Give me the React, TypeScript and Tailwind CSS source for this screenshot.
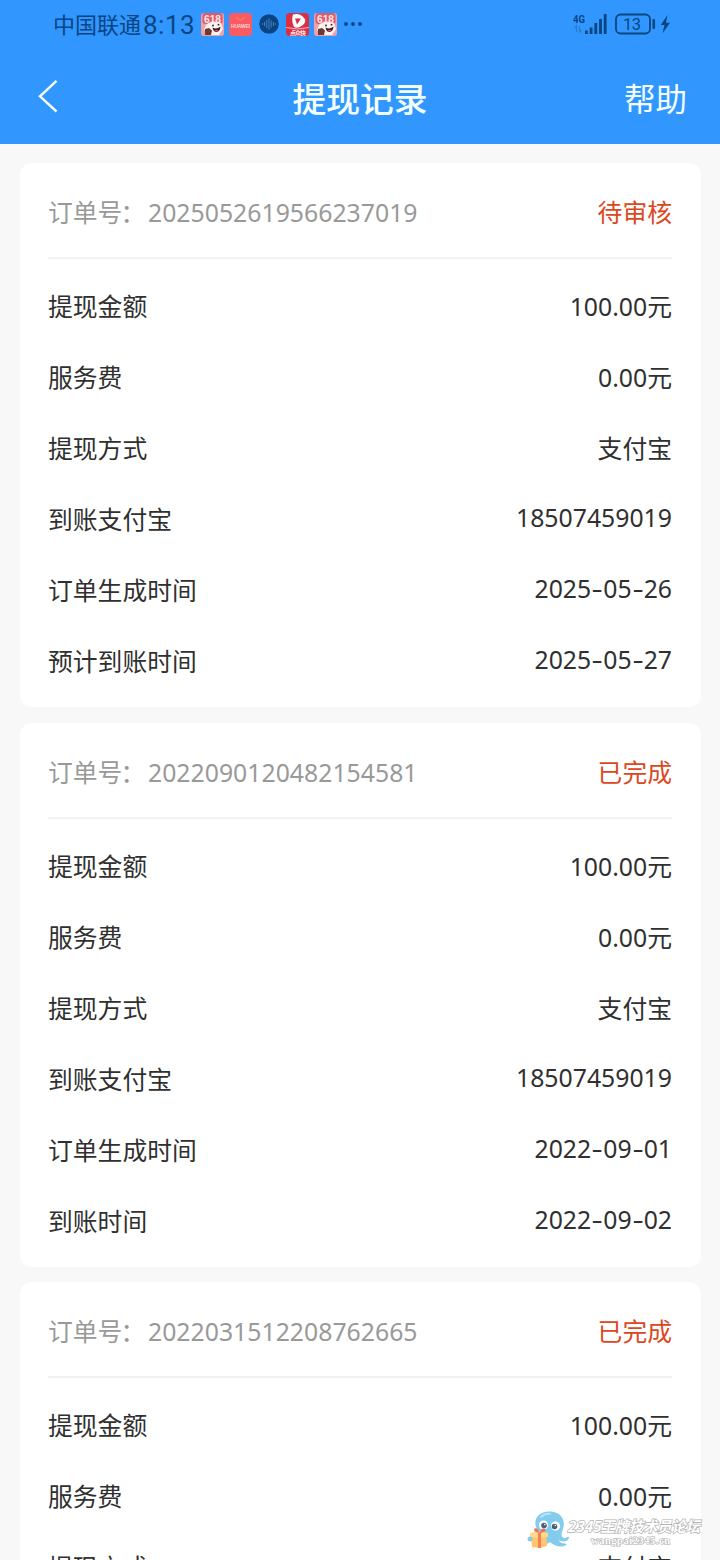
import React from 'react';

interface OrderRow {
  label: string;
  value: string;
  latin?: boolean;
}

interface Order {
  id: string;
  status: string;
  rows: OrderRow[];
}

const orders: Order[] = [
  {
    id: '2025052619566237019',
    status: '待审核',
    rows: [
      { label: '提现金额', value: '100.00元' },
      { label: '服务费', value: '0.00元' },
      { label: '提现方式', value: '支付宝' },
      { label: '到账支付宝', value: '18507459019', latin: true },
      { label: '订单生成时间', value: '2025-05-26', latin: true },
      { label: '预计到账时间', value: '2025-05-27', latin: true },
    ],
  },
  {
    id: '2022090120482154581',
    status: '已完成',
    rows: [
      { label: '提现金额', value: '100.00元' },
      { label: '服务费', value: '0.00元' },
      { label: '提现方式', value: '支付宝' },
      { label: '到账支付宝', value: '18507459019', latin: true },
      { label: '订单生成时间', value: '2022-09-01', latin: true },
      { label: '到账时间', value: '2022-09-02', latin: true },
    ],
  },
  {
    id: '2022031512208762665',
    status: '已完成',
    rows: [
      { label: '提现金额', value: '100.00元' },
      { label: '服务费', value: '0.00元' },
      { label: '提现方式', value: '支付宝' },
    ],
  },
];

const SaleIcon: React.FC = () => (
  <svg className="h-[23px] w-[23px]" viewBox="0 0 23 23">
    <rect width="23" height="23" rx="3" fill="#f0a0a8" />
    <rect x="1.500" width="20" height="11" rx="3" fill="#df5a6c" />
    <path d="M5 12C8 8 16 8 20 10l2 6-4 6H9L3 17z" fill="#fff3f1" />
    <text x="3" y="9.500" fontSize="11" fontWeight="700" fill="#ffe9e6" fontFamily="Liberation Sans, sans-serif" textLength="17" lengthAdjust="spacingAndGlyphs">618</text>
    <path d="M4 16l4-1 3 2.500-1 4.500H4z" fill="#6b3b2e" />
    <path d="M11.500 14.500q4 2.500 8-1-.5 5-4 5.500-3 0-4-4.500z" fill="#35191e" />
    <path d="M13.500 17.500q2-1 4-.5-2 2.500-4 .5z" fill="#e95566" />
    <circle cx="12" cy="12.500" r=".9" fill="#35191e" />
    <circle cx="17.500" cy="11.700" r=".9" fill="#35191e" />
  </svg>
);

const HuaweiIcon: React.FC = () => (
  <svg className="h-[23px] w-[23px]" viewBox="0 0 23 23">
    <rect width="23" height="23" rx="4" fill="#fa5a62" />
    <path d="M7.500 4q4 6 8 0" fill="none" stroke="#ff7e68" strokeWidth="1.300" />
    <text x="2" y="14.500" fontSize="5" fontWeight="700" fill="#ffd3d1" fontFamily="Liberation Sans, sans-serif" textLength="19">HUAWEI</text>
  </svg>
);

const VoiceIcon: React.FC = () => (
  <svg className="h-5 w-5" viewBox="0 0 20 20">
    <circle cx="10" cy="10" r="9.800" fill="#0b4380" />
    <path d="M3.500 9.300v1.400M5.600 8v4M7.800 6v8M10 4.500v11M12.200 6.500v7M14.400 8v4M16.500 9.300v1.400" stroke="#3f86c8" strokeWidth="1" />
  </svg>
);

const VideoIcon: React.FC = () => (
  <svg className="h-[23px] w-[23px]" viewBox="0 0 23 23">
    <rect width="23" height="23" rx="3.500" fill="#db3044" />
    <path d="M7 1.500Q14-.5 18 5q3 3-1 7-5 4-9 2Q5 8 7 1.500z" fill="#fff" />
    <path d="M9 5.500h6l-4 6z" fill="#db3044" />
    <path d="M0 14.500q11 3 23 0" stroke="#f7b5bb" fill="none" />
    <text x="4" y="21.500" fontSize="6" fontWeight="700" fill="#ffe5e5" fontFamily="Noto Sans CJK SC, sans-serif" textLength="16">点众快</text>
  </svg>
);

const StatusBar: React.FC = () => (
  <div className="flex h-12 items-center justify-between pr-[49px] pl-[53px] text-[#0a4583]">
    <div className="flex items-center">
      <span className="w-[90px] text-[22px] leading-[48px] whitespace-nowrap">中国联通</span>
      <span className="w-[58px] pt-0.5 font-[Roboto] text-[26px] leading-[48px] tracking-[0.5px] whitespace-nowrap">8:13</span>
      <div className="flex items-center gap-[5px]">
        <SaleIcon />
        <HuaweiIcon />
        <div className="mx-[2px] flex"><VoiceIcon /></div>
        <VideoIcon />
        <SaleIcon />
      </div>
      <svg className="ml-[7px] h-1 w-[18px]" viewBox="0 0 18 4" fill="currentColor">
        <circle cx="2" cy="2" r="1.900" />
        <circle cx="9" cy="2" r="1.900" />
        <circle cx="16" cy="2" r="1.900" />
      </svg>
    </div>
    <svg className="mt-0.5 h-[26px] w-[98px]" viewBox="0 0 98 26" fill="currentColor">
      <text x="0" y="10.500" fontSize="11" fontWeight="700" fontFamily="Roboto, sans-serif" textLength="12" lengthAdjust="spacingAndGlyphs">4G</text>
      <path d="M3.500 20v-6l-2 2M6.500 14v6l2-2" fill="none" stroke="#2879cf" strokeWidth="1.200" />
      <path d="M12 18.500h2.800V22H12zM16.700 15.500h2.800V22h-2.800zM21.400 11h2.800v11h-2.800zM26.100 7h2.800v15h-2.800zM30.800 2h2.800v20h-2.800z" />
      <rect x="43" y="2.500" width="34" height="19" rx="4.500" fill="none" stroke="currentColor" strokeWidth="1.800" />
      <text x="50" y="17.500" fontSize="16.500" fontFamily="Roboto, sans-serif" textLength="18">13</text>
      <rect x="79.500" y="7" width="2.600" height="10" rx="1" />
      <path d="M94.500 3l-6.800 10h3.800l-2 8.500 7.500-10.700h-4z" />
    </svg>
  </div>
);

const Header: React.FC = () => (
  <header className="h-36 bg-[#3197fe]">
    <StatusBar />
    <div className="flex h-24 items-center justify-between pr-[33px] pl-[38px] text-[#f4ffff]">
      <button className="flex w-[61px]" aria-label="返回">
        <svg className="h-[34px] w-5" viewBox="0 0 20 34" fill="none" stroke="currentColor" strokeWidth="2.400">
          <path d="M18.500 1.800L2 17.300l16.500 15.200" />
        </svg>
      </button>
      <h1 className="pt-1.5 text-[33.8px] leading-[48px] font-medium">提现记录</h1>
      <button className="w-[66px] pt-1.5 text-right text-[31.5px] leading-[48px] whitespace-nowrap">帮助</button>
    </div>
  </header>
);

// The date separators are drawn wider than the font's own hyphen
const Value: React.FC<{ text: string }> = ({ text }) => (
  <>
    {text.split('-').map((part, i) => (
      <React.Fragment key={i}>
        {i > 0 && <span className="inline-block w-3 scale-x-140 text-center">-</span>}
        {part}
      </React.Fragment>
    ))}
  </>
);

const OrderCard: React.FC<{ order: Order }> = ({ order }) => (
  <section className="mb-[15.6px] h-[544px] rounded-xl bg-white pr-[29px] pl-7 text-[24.8px] text-[#303030]">
    <div className="flex h-[96px] items-center justify-between border-b-2 border-[#f2f2f2] pt-[5px] whitespace-nowrap">
      <div className="flex text-[#999]">
        <span className="w-[100px]">订单号<span className="-ml-0.5">：</span></span>
        <span>{order.id}</span>
      </div>
      <span className="text-[#dc4722]">{order.status}</span>
    </div>
    <div className="pt-3">
      {order.rows.map(row => (
        <div key={row.label} className="flex h-[71px] items-center justify-between whitespace-nowrap">
          <span>{row.label}</span>
          <span className={row.latin ? '-mt-1' : ''}><Value text={row.value} /></span>
        </div>
      ))}
    </div>
  </section>
);

const Watermark: React.FC = () => (
  <svg className="absolute top-[1508px] left-[527px] h-[44px] w-[180px]" viewBox="0 0 180 44">
    <path d="M9 19C6 9 14 3 23 3.500 34 4 39 12 36 21c-2 5-2 8 1 9 2 1 3-2 5-1 0 4-5 6-10 3 1 4 5 3 8 4-4 5-13 2-17-2-5 4-12 4-15 0 4-3 4-9 1-15z" fill="#84ccee" />
    <path d="M14 9Q18 5 23 6" fill="none" stroke="#b5e3f7" strokeWidth="2" strokeLinecap="round" />
    <circle cx="16.500" cy="17" r="4.600" fill="#fff" />
    <circle cx="28.500" cy="18" r="4.600" fill="#fff" />
    <circle cx="17" cy="17.500" r="2.800" fill="#46607c" />
    <circle cx="27.500" cy="18.500" r="2.800" fill="#46607c" />
    <circle cx="17.800" cy="16.500" r=".8" fill="#fff" />
    <circle cx="28.300" cy="17.500" r=".8" fill="#fff" />
    <path d="M4 26l15-1 1 13-7 2-8-1z" fill="#ffc66e" />
    <path d="M3 25l9-2 9 2v4l-9 1-9-1z" fill="#ffda84" />
    <path d="M11 25h3v15h-3z" fill="#f4805f" />
    <path d="M12.500 25q-7-1-5-4.500 3-1.500 5 4 3-6 6-3.500 1 3-6 4" fill="#ee735d" />
    <circle cx="3" cy="31" r="2.500" fill="#84ccee" />
    <text x="40" y="23.500" fontSize="15" fontFamily="Noto Sans CJK SC, sans-serif" fontStyle="italic" fontWeight="700" fill="#fff" stroke="#b0b0b0" strokeWidth="1.400" paintOrder="stroke" textLength="133" lengthAdjust="spacingAndGlyphs">2345王牌技术员论坛</text>
    <text x="64" y="35.500" fontSize="10.500" fontFamily="Liberation Serif, serif" fontWeight="700" fill="#fff" stroke="#acacac" strokeWidth="1.200" paintOrder="stroke" textLength="79">wangpai2345.cn</text>
  </svg>
);

const App: React.FC = () => {
  return (
    <div className="relative h-[1560px] w-[720px] overflow-hidden bg-[#f8f8f8] font-['Noto_Sans','Noto_Sans_CJK_SC',sans-serif]">
      <Header />
      <main className="pt-[19px] pr-[19px] pl-5">
        {orders.map(order => (
          <OrderCard key={order.id} order={order} />
        ))}
      </main>
      <Watermark />
    </div>
  );
};

export default App;
